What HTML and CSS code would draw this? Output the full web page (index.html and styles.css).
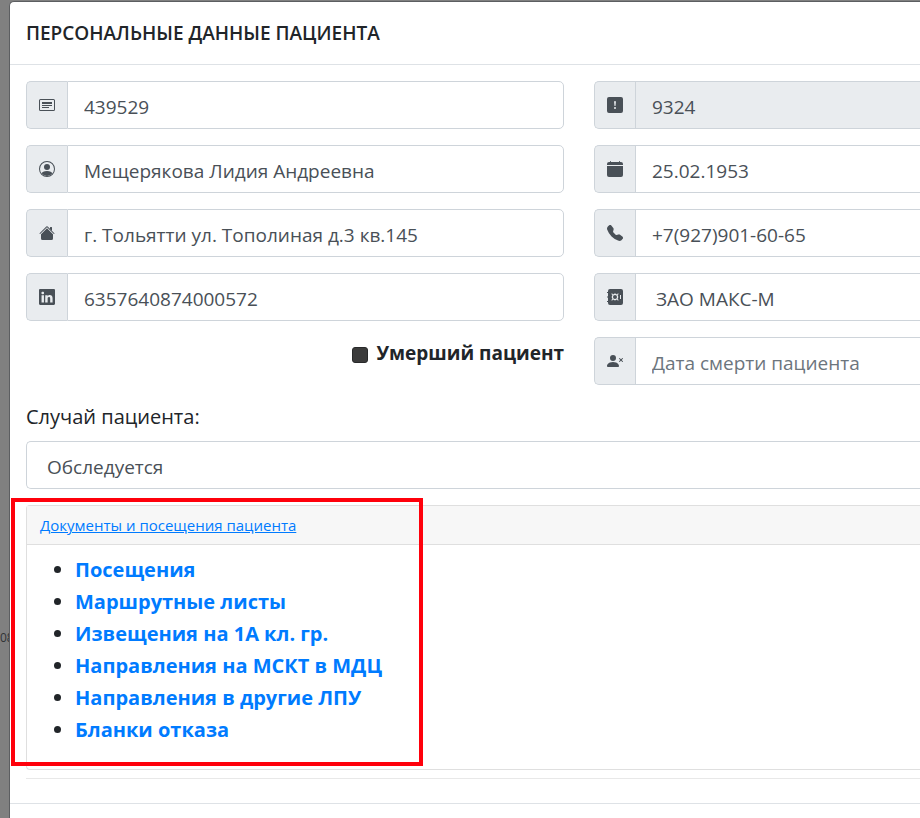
FILE: index.html
```html
<!DOCTYPE html>
<html lang="ru">
<head>
<meta charset="utf-8">
<meta name="viewport" content="width=device-width, initial-scale=1">
<title>Персональные данные пациента</title>
<link rel="stylesheet" href="styles.css">
</head>
<body>
<span class="page-number" aria-hidden="true">08</span>
<div class="modal" role="dialog" aria-labelledby="modal-title">
  <header class="modal-header">
    <h1 class="modal-title" id="modal-title">ПЕРСОНАЛЬНЫЕ ДАННЫЕ ПАЦИЕНТА</h1>
  </header>
  <form class="modal-body">
    <div class="fields">
      <div class="input-group">
        <label class="addon" for="card" aria-label="Номер карты"><svg viewBox="0 0 16 16"><path fill-rule="evenodd" d="M14.5 3h-13a.5.5 0 0 0-.5.5v9a.5.5 0 0 0 .5.5h13a.5.5 0 0 0 .5-.5v-9a.5.5 0 0 0-.5-.5zm-13-1A1.5 1.5 0 0 0 0 3.500v9A1.500 1.500 0 0 0 1.500 14h13a1.500 1.500 0 0 0 1.500-1.500v-9A1.500 1.500 0 0 0 14.500 2h-13z"/><path d="M3 5h10v2H3zM3 8h10v1H3zM3 10h7v1H3z"/></svg></label>
        <input class="control" id="card" type="text" value="439529">
      </div>
      <div class="input-group open">
        <label class="addon" for="code" aria-label="Код"><svg viewBox="0 0 16 16"><path fill-rule="evenodd" d="M2 0a2 2 0 0 0-2 2v12a2 2 0 0 0 2 2h12a2 2 0 0 0 2-2V2a2 2 0 0 0-2-2H2zm6 4a.905.905 0 0 0-.9.995l.35 3.507a.552.552 0 0 0 1.100 0l.35-3.507A.905.905 0 0 0 8 4zm0 6a1 1 0 1 0 0 2 1 1 0 0 0 0-2z"/></svg></label>
        <input class="control" id="code" type="text" value="9324" readonly>
      </div>
      <div class="input-group">
        <label class="addon" for="name" aria-label="ФИО"><svg viewBox="0 0 16 16"><path d="M13.468 12.370C12.758 11.226 11.195 10 8 10s-4.757 1.225-5.468 2.370A6.987 6.987 0 0 0 8 15a6.987 6.987 0 0 0 5.468-2.630z"/><path fill-rule="evenodd" d="M8 9a3 3 0 1 0 0-6 3 3 0 0 0 0 6z"/><path fill-rule="evenodd" d="M8 1a7 7 0 1 0 0 14A7 7 0 0 0 8 1zM0 8a8 8 0 1 1 16 0A8 8 0 0 1 0 8z"/></svg></label>
        <input class="control" id="name" type="text" value="Мещерякова Лидия Андреевна">
      </div>
      <div class="input-group open">
        <label class="addon" for="birth" aria-label="Дата рождения"><svg viewBox="0 0 16 16"><path d="M4 .5a.5.5 0 0 0-1 0V1H2a2 2 0 0 0-2 2v1h16V3a2 2 0 0 0-2-2h-1V.5a.5.5 0 0 0-1 0V1H4V.5z"/><path d="M0 5h16v9a2 2 0 0 1-2 2H2a2 2 0 0 1-2-2V5z"/></svg></label>
        <input class="control" id="birth" type="text" value="25.02.1953">
      </div>
      <div class="input-group">
        <label class="addon" for="address" aria-label="Адрес"><svg viewBox="0 0 16 16"><path fill-rule="evenodd" d="M8 3.293l6 6V13.500a1.500 1.500 0 0 1-1.500 1.500h-9A1.500 1.500 0 0 1 2 13.500V9.293l6-6zm5-.793V6l-2-2V2.500a.5.5 0 0 1 .5-.5h1a.5.5 0 0 1 .5.5z"/><path fill-rule="evenodd" d="M7.293 1.500a1 1 0 0 1 1.414 0l6.647 6.646a.5.5 0 0 1-.708.708L8 2.207 1.354 8.854a.5.5 0 1 1-.708-.708L7.293 1.500z"/></svg></label>
        <input class="control" id="address" type="text" value="г. Тольятти ул. Тополиная д.3 кв.145">
      </div>
      <div class="input-group open">
        <label class="addon" for="phone" aria-label="Телефон"><svg viewBox="0 0 16 16"><path fill-rule="evenodd" d="M1.885.511a1.745 1.745 0 0 1 2.610.163L6.290 2.980c.329.423.445.974.315 1.494l-.547 2.190a.678.678 0 0 0 .178.643l2.457 2.457a.678.678 0 0 0 .644.178l2.189-.547a1.745 1.745 0 0 1 1.494.315l2.306 1.794c.829.645.905 1.870.163 2.611l-1.034 1.034c-.740.740-1.846 1.065-2.877.702a18.634 18.634 0 0 1-7.010-4.420 18.634 18.634 0 0 1-4.420-7.009c-.362-1.030-.037-2.137.703-2.877L1.885.511z"/></svg></label>
        <input class="control" id="phone" type="tel" value="+7(927)901-60-65">
      </div>
      <div class="input-group">
        <label class="addon" for="policy" aria-label="Номер полиса"><svg viewBox="0 0 16 16"><path fill-rule="evenodd" d="M0 1.146C0 .513.526 0 1.175 0h13.650C15.474 0 16 .513 16 1.146v13.708c0 .633-.526 1.146-1.175 1.146H1.175C.526 16 0 15.487 0 14.854V1.146zm4.943 12.248V6.169H2.542v7.225h2.401zm-1.200-8.212c.837 0 1.358-.554 1.358-1.248-.015-.709-.520-1.248-1.342-1.248-.822 0-1.359.540-1.359 1.248 0 .694.521 1.248 1.327 1.248h.016zm4.908 8.212V9.359c0-.216.016-.432.080-.586.173-.431.568-.878 1.232-.878.869 0 1.216.662 1.216 1.634v3.865h2.401V9.250c0-2.220-1.184-3.252-2.764-3.252-1.274 0-1.845.700-2.165 1.193V6.169H6.250c.030.678 0 7.225 0 7.225h2.401z"/></svg></label>
        <input class="control" id="policy" type="text" value="6357640874000572">
      </div>
      <div class="input-group open">
        <label class="addon" for="insurer" aria-label="Страховая компания"><svg viewBox="0 0 16 16"><path fill-rule="evenodd" d="M3 0h11a2 2 0 0 1 2 2v12a2 2 0 0 1-2 2H3a2 2 0 0 1-2-2v-1H0v-1h1V8.500H0v-1h1V4H0V3h1V2a2 2 0 0 1 2-2zM5 4.300l-.7.700 1.100 1.100a3 3 0 0 0 0 3.800L4.300 11l.7.700 1.100-1.100a3 3 0 0 0 3.800 0l1.100 1.100.7-.7-1.100-1.100a3 3 0 0 0 0-3.800L11.700 5l-.7-.7-1.100 1.100a3 3 0 0 0-3.800 0zM8 6a2 2 0 1 1 0 4 2 2 0 0 1 0-4zM13 6v4h1V6z"/></svg></label>
        <select class="control select" id="insurer"><option>ЗАО МАКС-М</option></select>
      </div>
      <div class="check">
        <input class="checkbox" id="deceased" type="checkbox">
        <label for="deceased">Умерший пациент</label>
      </div>
      <div class="input-group open">
        <label class="addon" for="death" aria-label="Дата смерти"><svg viewBox="0 0 16 16"><path fill-rule="evenodd" d="M1 14s-1 0-1-1 1-4 6-4 6 3 6 4-1 1-1 1H1zm5-6a3 3 0 1 0 0-6 3 3 0 0 0 0 6zm6.146-2.854a.5.5 0 0 1 .708 0L14 6.293l1.146-1.147a.5.5 0 0 1 .708.708L14.707 7l1.147 1.146a.5.5 0 0 1-.708.708L14 7.707l-1.146 1.147a.5.5 0 0 1-.708-.708L13.293 7l-1.147-1.146a.5.5 0 0 1 0-.708z"/></svg></label>
        <input class="control" id="death" type="text" placeholder="Дата смерти пациента">
      </div>
    </div>
    <label class="case-label" for="case">Случай пациента:</label>
    <select class="control select case" id="case"><option>Обследуется</option></select>
    <section class="card">
      <div class="card-header"><a href="#documents">Документы и посещения пациента</a></div>
      <ul class="links" id="documents">
        <li><a href="#visits">Посещения</a></li>
        <li><a href="#routes">Маршрутные листы</a></li>
        <li><a href="#notices">Извещения на 1А кл. гр.</a></li>
        <li><a href="#mskt">Направления на МСКТ в МДЦ</a></li>
        <li><a href="#referrals">Направления в другие ЛПУ</a></li>
        <li><a href="#refusals">Бланки отказа</a></li>
      </ul>
      <div class="highlight"></div>
    </section>
    <hr class="divider">
  </form>
  <footer class="modal-footer"></footer>
</div>
</body>
</html>
```
FILE: styles.css
```css
* { box-sizing: border-box; }

html { height: 100%; }

body {
  position: relative;
  display: flex;
  min-height: 100%;
  margin: 0;
  padding: 1px 0 0 9px;
  background: #808080;
  color: #212529;
  font-family: "Segoe UI", "Open Sans", "Noto Sans", sans-serif;
  font-size: 19px;
  line-height: 30px;
}

.page-number {
  position: absolute;
  top: 628px;
  left: 0;
  color: #303336;
  font-size: 12px;
  line-height: 20px;
}

/* The dialog is open on the right: it runs up to the window's edge. */
.modal {
  position: relative;
  flex: 1;
  min-width: 0;
  border: 1px solid #5c5e61;
  border-width: 1px 0 0 1px;
  border-radius: 5px 0 0 0;
  background: #fff;
}

.modal-header {
  padding: 16px;
  border-bottom: 1px solid #dee2e6;
}

.modal-title {
  margin: 0;
  font-size: 19px;
  font-weight: 600;
  line-height: 30px;
}

.modal-body { padding: 16px 0 24px 16px; }

.fields {
  display: grid;
  grid-template-columns: minmax(0, 538px) minmax(0, 1fr);
  gap: 16px 30px;
}

.input-group { display: flex; }

.addon {
  display: flex;
  align-items: center;
  padding: 0 12px;
  border: 1px solid #ced4da;
  border-right: 0;
  border-radius: 5px 0 0 5px;
  background: #e9ecef;
  color: #495057;
}

.addon svg {
  display: block;
  width: 16px;
  height: 16px;
  fill: currentColor;
}

.control {
  flex: 1;
  min-width: 0;
  height: 48px;
  margin: 0;
  padding: 4px 16px 0;
  border: 1px solid #ced4da;
  border-radius: 5px;
  background: #fff;
  color: #495057;
  font: inherit;
}

.input-group .control { border-radius: 0 5px 5px 0; }

.input-group.open .control {
  border-right: 0;
  border-radius: 0;
}

.control:read-only:not(select) { background: #e9ecef; }
.control::placeholder { color: #6c757d; opacity: 1; }

.select {
  padding-left: 20px;
  appearance: none;
}

.check {
  display: flex;
  align-items: flex-start;
  justify-content: flex-end;
  gap: 8px;
  padding-top: 1px;
  font-weight: 700;
}

.checkbox {
  width: 16px;
  height: 16px;
  margin: 9px 0 0;
  border: 1px solid #28292a;
  border-radius: 3px;
  background: #3b3b3b;
  appearance: none;
}

.checkbox:checked { background: #007bff; }

.case-label {
  display: block;
  margin: 17px 0 9px;
  font-size: 20px;
}

.case {
  width: 100%;
  border-right: 0;
  border-radius: 5px 0 0 5px;
}

.card {
  position: relative;
  margin-top: 16px;
  border: 1px solid #dfdfdf;
  border-right: 0;
  border-radius: 4px 0 0 4px;
}

.card-header {
  padding: 7px 13px;
  border-bottom: 1px solid #dfdfdf;
  background: #f7f7f7;
  font-size: 15px;
  line-height: 24px;
}

a { color: #007bff; }

.links {
  margin: 0;
  padding: 9px 16px 23px 48px;
  font-size: 20px;
  font-weight: 700;
  line-height: 32px;
}

.links a { text-decoration: none; }

.highlight {
  position: absolute;
  top: -8px;
  bottom: 3px;
  left: -16px;
  width: 412px;
  border: 4px solid #ff000b;
  pointer-events: none;
}

.divider {
  margin: 8px 0 0;
  border: 0;
  border-top: 1px solid #e8e8e8;
}

.modal-footer {
  border-top: 1px solid #dee2e6;
}
```
